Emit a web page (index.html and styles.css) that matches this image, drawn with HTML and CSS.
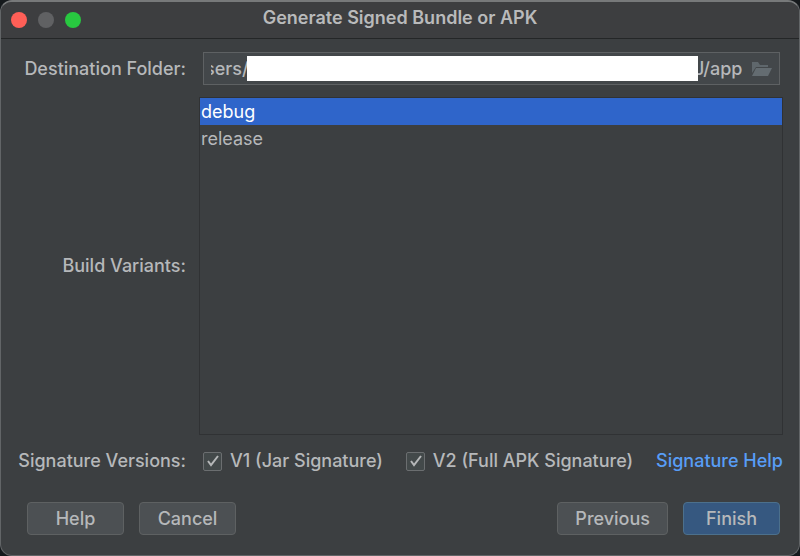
FILE: index.html
```
<!DOCTYPE html>
<html lang="en">
<head>
  <meta charset="UTF-8">
  <title>Generate Signed Bundle or APK</title>
  <link rel="stylesheet" href="styles.css">
</head>
<body>
<form class="dialog">
  <header class="titlebar">
    <div class="lights">
      <button type="button" class="light close" aria-label="Close"></button>
      <button type="button" class="light minimize" aria-label="Minimize" disabled></button>
      <button type="button" class="light maximize" aria-label="Maximize"></button>
    </div>
    <h1>Generate Signed Bundle or APK</h1>
  </header>

  <main class="fields">
    <label for="folder">Destination Folder:</label>
    <div class="path">
      <input type="text" id="folder" class="path_start" value="sers/">
      <span class="redacted"></span>
      <input type="text" class="path_end" value="J/app" aria-label="Destination folder, end of path">
      <button type="button" class="browse" aria-label="Browse">
        <svg width="20" height="16" viewBox="0 0 20 16">
          <path fill="#5f676c" d="M0 12V1h6l2 3h8v2H4z"/>
          <path fill="#646c71" d="M4 7h16l-4 8H0z"/>
        </svg>
      </button>
    </div>

    <label for="variants">Build Variants:</label>
    <select id="variants" class="variants" size="12">
      <option selected>debug</option>
      <option>release</option>
    </select>

    <span class="row_label">Signature Versions:</span>
    <div class="versions">
      <label class="check"><input type="checkbox" checked>V1 (Jar Signature)</label>
      <label class="check"><input type="checkbox" checked>V2 (Full APK Signature)</label>
      <a href="#">Signature Help</a>
    </div>
  </main>

  <footer class="buttons">
    <button type="button" class="btn">Help</button>
    <button type="button" class="btn">Cancel</button>
    <button type="button" class="btn previous">Previous</button>
    <button type="submit" class="btn primary">Finish</button>
  </footer>
</form>
</body>
</html>
```
FILE: styles.css
```
* {
  box-sizing: border-box;
}

body {
  margin: 0;
  background: #15191c;
  color: #b6b8ba;
  font-family: Inter, "Liberation Sans", sans-serif;
  font-size: 18px;
  font-weight: 500;
  line-height: 24px;
}

input, select, button {
  font: inherit;
  color: inherit;
}

.dialog {
  display: flex;
  flex-direction: column;
  min-height: 100vh;
  border: 1px solid #626567;
  border-top: 2px solid #77797a;
  border-radius: 12px;
  background: #3c3f41;
  overflow: hidden;
}

.titlebar {
  display: grid;
  grid-template-columns: 1fr auto 1fr;
  align-items: center;
  height: 37px;
  padding: 0 10px;
  background: #3d3e40;
  border-bottom: 1px solid #242627;
}

.titlebar h1 {
  margin: 0 0 4px;
  font-size: 18px;
  font-weight: 600;
  line-height: 28px;
  color: #b9babb;
}

.lights {
  display: flex;
  gap: 11px;
}

.light {
  width: 16px;
  height: 16px;
  padding: 0;
  border: none;
  border-radius: 50%;
}

.close {
  background: #ff5f57;
}

.minimize {
  background: #606163;
}

.maximize {
  background: #28c840;
}

.fields {
  flex: 1;
  display: grid;
  grid-template-columns: 170px 1fr;
  grid-template-rows: auto 1fr auto;
  column-gap: 13px;
  row-gap: 12px;
  align-items: center;
  padding: 13px 16px 0 15px;
}

.fields > label, .row_label {
  text-align: right;
  white-space: nowrap;
}

.path {
  display: flex;
  align-items: center;
  height: 33px;
  margin: 0 3px 0 4px;
  padding: 0 7px;
  border: 1px solid #5e6163;
  background: #43474a;
}

.path input {
  height: 28px;
  padding: 0;
  border: none;
  outline: none;
  background: transparent;
}

.path_start {
  width: 38px;
  text-indent: -6px;
}

.redacted {
  position: relative;
  flex: 1;
  height: 25px;
  margin-left: -2px;
  margin-right: -4px;
  background: #fff;
}

.path .path_end {
  width: 50px;
}

.browse {
  display: flex;
  margin-left: 8px;
  padding: 0;
  border: none;
  background: none;
}

.variants {
  width: 100%;
  height: 100%;
  padding: 0;
  border: 1px solid #303234;
  border-radius: 0;
  outline: none;
  background: #3c3f41;
  overflow: hidden;
}

.variants option {
  min-height: 27px;
  padding: 3px 1px 0;
  color: #b6b8ba;
}

.variants option:checked {
  background: #2f65ca linear-gradient(#2f65ca, #2f65ca);
  color: #fff;
}

.versions {
  display: flex;
  align-items: center;
  justify-content: space-between;
  height: 28px;
  padding-left: 4px;
  white-space: nowrap;
}

.check {
  display: flex;
  align-items: center;
  gap: 8px;
}

.check input {
  appearance: none;
  width: 19px;
  height: 19px;
  margin: 0;
  border: 1px solid #6b6e70;
  border-radius: 2px;
  background: #43494a url("data:image/svg+xml,%3Csvg xmlns='http://www.w3.org/2000/svg' viewBox='0 0 17 17'%3E%3Cpath d='M4 8l3 4 7-9' fill='none' stroke='%23b5b7b8' stroke-width='2'/%3E%3C/svg%3E");
}

a {
  color: #589df6;
  text-decoration: none;
}

.buttons {
  display: flex;
  gap: 15px;
  padding: 27px 19px 20px 26px;
}

.btn {
  min-width: 97px;
  height: 33px;
  padding: 0 17px;
  border: 1px solid #5e6162;
  border-radius: 4px;
  background: #4c5053;
}

.previous {
  margin-left: auto;
}

.primary {
  border-color: #4c708c;
  background: #365880;
}
```
